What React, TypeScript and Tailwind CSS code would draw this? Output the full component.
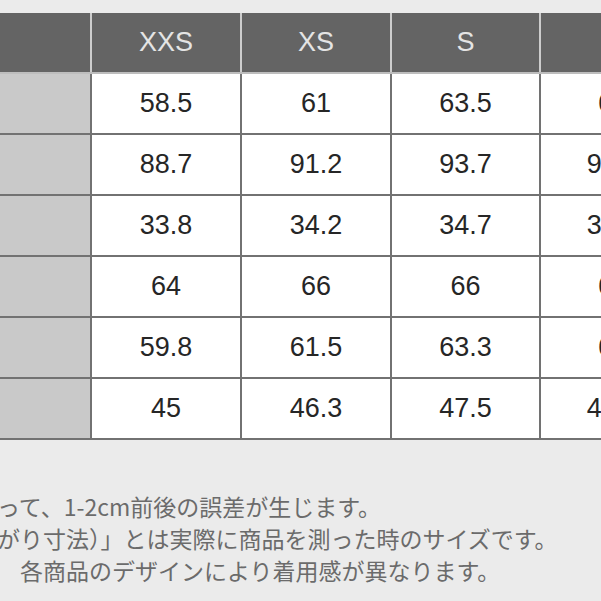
const sizes = ['XXS', 'XS', 'S', 'M']

const rows = [
  ['58.5', '61', '63.5', '66'],
  ['88.7', '91.2', '93.7', '96.2'],
  ['33.8', '34.2', '34.7', '35.2'],
  ['64', '66', '66', '68'],
  ['59.8', '61.5', '63.3', '65'],
  ['45', '46.3', '47.5', '48.7'],
]

const notes = [
  'って、1-2cm前後の誤差が生じます。',
  'がり寸法）」とは実際に商品を測った時のサイズです。',
  '\u3000各商品のデザインにより着用感が異なります。',
]

const cols = 'grid grid-cols-[90px_148px_148px_147px_144px]'

export default function App() {
  return (
    <div
      className="w-[601px] h-[601px] overflow-hidden bg-[#ebebeb]"
      style={{ fontFamily: '"Liberation Sans", Arial, "Noto Sans CJK JP", sans-serif' }}
    >
      <div className="pt-[13px] w-[700px]">
        {/* header */}
        <div className={`${cols} gap-x-[2px] bg-[#cdcdcd] h-[59px]`}>
          <div className="bg-[#646464]" />
          {sizes.map(s => (
            <div key={s} className="bg-[#646464] flex items-center justify-center text-[27px] text-[#e4e4e4]">
              {s}
            </div>
          ))}
        </div>

        {/* body */}
        <div className={`${cols} gap-[2px] bg-[#727272] border-t-2 border-t-[#bdbdbd] border-b-2 border-b-[#727272]`}>
          {rows.map((r, i) => (
            <div key={i} className="contents">
              <div className="bg-[#c9c9c9] h-[59px]" />
              {r.map((v, j) => (
                <div key={j} className="bg-white h-[59px] flex items-center justify-center text-[27px] text-[#262626]">
                  {v}
                </div>
              ))}
            </div>
          ))}
        </div>
      </div>

      {/* notes */}
      <div
        className="mt-[50px] -ml-[3px] flex flex-col text-[23px] leading-[32px] text-[#6b6b6b] whitespace-nowrap"
        style={{ fontFamily: '"Noto Sans CJK JP", sans-serif' }}
      >
        {notes.map(n => (
          <div key={n}>{n}</div>
        ))}
      </div>
    </div>
  )
}
